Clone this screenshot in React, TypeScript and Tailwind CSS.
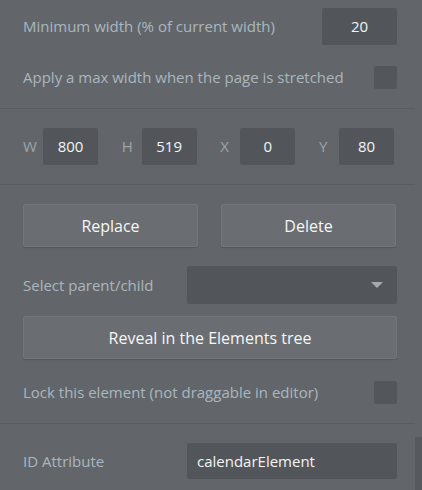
import { useState } from 'react'

function Checkbox() {
  return <div className="w-[23px] h-[23px] rounded-[2px] bg-[#53575b] shrink-0" />
}

function NumBox({ label, value }: { label: string; value: string }) {
  return (
    <div className="flex items-center">
      <span className="w-[20px] text-[15px] text-[#9ea4a8]">{label}</span>
      <div className="w-[55px] h-[37px] rounded-[2px] bg-[#52565a] flex items-center justify-center text-[15px] text-[#f4f4f4]">
        {value}
      </div>
    </div>
  )
}

function Btn({ children, className = '' }: { children: React.ReactNode; className?: string }) {
  return (
    <button
      type="button"
      className={`h-[43px] rounded-[2px] border border-[#737779] bg-[#6a6e72] text-[16px] text-[#f6f6f6] shadow-[0_1px_1px_rgba(0,0,0,0.15)] ${className}`}
    >
      {children}
    </button>
  )
}

export default function App() {
  const [id] = useState('calendarElement')

  return (
    <div
      className="w-[422px] h-[490px] overflow-hidden bg-[#62666a] flex text-[15px] text-[#aab6bf]"
      style={{ fontFamily: '"Open Sans", "Liberation Sans", sans-serif' }}
    >
      <div className="w-[415px] shrink-0">
        {/* page width */}
        <div className="pl-[23px] pr-[18px] pt-[8px] pb-[19px] border-b border-[#595d61]">
          <div className="flex items-center justify-between">
            <span>Minimum width (% of current width)</span>
            <div className="w-[75px] h-[37px] rounded-[2px] bg-[#52565a] flex items-center justify-center text-[15px] text-[#f4f4f4]">
              20
            </div>
          </div>
          <div className="mt-[21px] flex items-center justify-between">
            <span>Apply a max width when the page is stretched</span>
            <Checkbox />
          </div>
        </div>

        {/* geometry */}
        <div className="pl-[23px] pr-[21px] py-[19px] border-b border-[#595d61] flex justify-between">
          <NumBox label="W" value="800" />
          <NumBox label="H" value="519" />
          <NumBox label="X" value="0" />
          <NumBox label="Y" value="80" />
        </div>

        {/* actions */}
        <div className="pl-[23px] pr-[18px] pt-[19px] pb-[19px] border-b border-[#595d61]">
          <div className="flex gap-[23px]">
            <Btn className="w-[175px]">Replace</Btn>
            <Btn className="w-[175px]">Delete</Btn>
          </div>
          <div className="mt-[19px] flex items-center">
            <span className="w-[164px]">Select parent/child</span>
            <div className="flex-1 h-[38px] rounded-[2px] bg-[#52565a] flex items-center justify-end pr-[14px]">
              <svg width="12" height="6" viewBox="0 0 12 6">
                <path d="M0 0h12L6 6z" fill="#a3abb1" />
              </svg>
            </div>
          </div>
          <Btn className="mt-[12px] w-full">Reveal in the Elements tree</Btn>
          <div className="mt-[22px] flex items-center justify-between">
            <span>Lock this element (not draggable in editor)</span>
            <Checkbox />
          </div>
        </div>

        {/* id */}
        <div className="pl-[23px] pr-[18px] pt-[19px] flex items-center">
          <span className="w-[164px]">ID Attribute</span>
          <div className="flex-1 h-[36px] rounded-[2px] bg-[#52565a] flex items-center px-[10px] text-[15px] text-[#f4f4f4]">
            {id}
          </div>
        </div>
      </div>
      <div className="flex-1 flex flex-col">
        <div className="h-[437px]" />
        <div className="flex-1 bg-[#56595d]" />
      </div>
    </div>
  )
}
